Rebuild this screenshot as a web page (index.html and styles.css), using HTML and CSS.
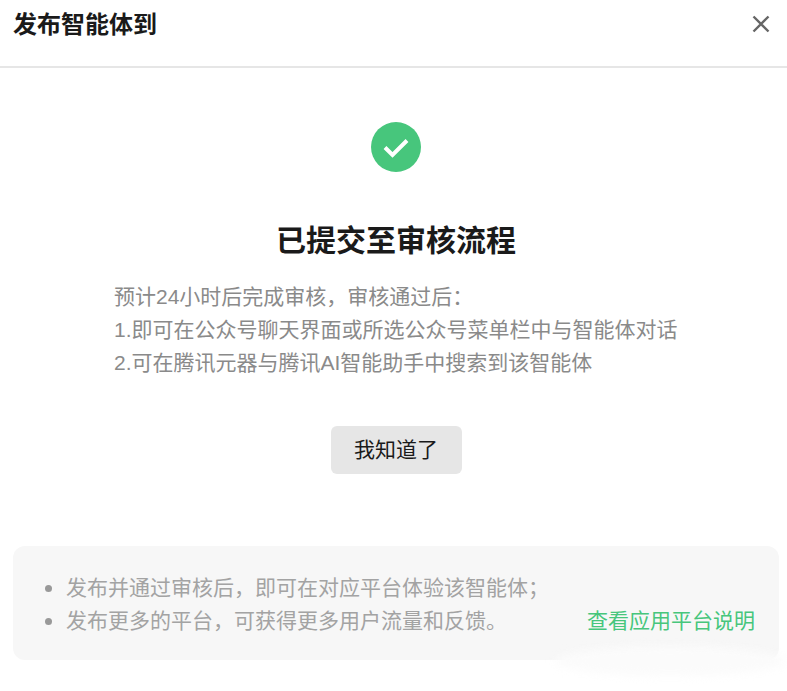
FILE: index.html
```html
<!doctype html>
<html lang="zh-CN">
<head>
  <meta charset="UTF-8">
  <title>发布智能体到</title>
  <link rel="stylesheet" href="styles.css">
</head>
<body>
<div class="dialog">
  <div class="head">
    <span class="head-title">发布智能体到</span>
    <svg class="close" width="20" height="20" viewBox="0 0 20 20">
      <path d="M2.5 2.5L17.5 17.5M17.5 2.5L2.5 17.5" stroke="#666" stroke-width="2.4" fill="none"/>
    </svg>
  </div>
  <div class="main">
    <svg class="ok" width="50" height="50" viewBox="0 0 50 50">
      <circle cx="25" cy="25" r="25" fill="#47c67c"/>
      <path d="M14 25.5L21.5 33L36 18.5" stroke="#fff" stroke-width="4" fill="none"/>
    </svg>
    <h2 class="title">已提交至审核流程</h2>
    <div class="desc">
      <p>预计24小时后完成审核，审核通过后：</p>
      <p>1.即可在公众号聊天界面或所选公众号菜单栏中与智能体对话</p>
      <p>2.可在腾讯元器与腾讯AI智能助手中搜索到该智能体</p>
    </div>
    <a href="#" class="btn">我知道了</a>
  </div>
  <div class="tips">
    <ul class="tips-list">
      <li>发布并通过审核后，即可在对应平台体验该智能体；</li>
      <li>发布更多的平台，可获得更多用户流量和反馈。</li>
    </ul>
    <a href="#" class="tips-link">查看应用平台说明</a>
    <div class="smear"></div>
  </div>
</div>
</body>
</html>
```

FILE: styles.css
```css
body {
  margin: 0;
  background: #fff;
  font-family: "Liberation Sans", "Noto Sans CJK SC", sans-serif;
}
.dialog {
  width: 787px;
  height: 691px;
  overflow: hidden;
}
.head {
  height: 68px;
  box-sizing: border-box;
  padding: 8px 16px 0 13px;
  display: flex;
  justify-content: space-between;
  border-bottom: 2px solid #e6e6e6;
}
.head-title {
  font-size: 24px;
  line-height: 34px;
  font-weight: 700;
  color: #1a1a1a;
}
.close {
  margin-top: 6px;
}
.main {
  display: flex;
  flex-direction: column;
  align-items: center;
  margin: 0 8px 0 13px;
  padding-top: 54px;
}
.title {
  margin: 47px 0 0;
  font-size: 30px;
  line-height: 44px;
  font-weight: 700;
  color: #1a1a1a;
}
.desc {
  width: 564px;
  margin-top: 17px;
  font-size: 21px;
  line-height: 33px;
  color: #8a8a8a;
}
.desc p {
  margin: 0;
}
.btn {
  width: 131px;
  height: 48px;
  margin-top: 47px;
  line-height: 48px;
  text-align: center;
  font-size: 21px;
  color: #1a1a1a;
  text-decoration: none;
  background: #e6e6e6;
  border-radius: 6px;
}
.tips {
  position: relative;
  height: 114px;
  box-sizing: border-box;
  margin: 72px 8px 0 13px;
  padding: 25px 24px 0 0;
  display: flex;
  justify-content: space-between;
  align-items: flex-start;
  background: #f7f7f7;
  border-radius: 12px;
}
.tips-list {
  margin: 0;
  padding: 0 0 0 32px;
  list-style: none;
  font-size: 21px;
  line-height: 33px;
  color: #a3a3a3;
}
.tips-list li::before {
  content: "";
  display: inline-block;
  width: 7px;
  height: 7px;
  margin-right: 14px;
  vertical-align: 3px;
  border-radius: 50%;
  background: #999;
}
.tips-link {
  margin-top: 33px;
  font-size: 21px;
  line-height: 33px;
  color: #47c67c;
  text-decoration: none;
}
.smear {
  position: absolute;
  right: -6px;
  bottom: -16px;
  width: 230px;
  height: 30px;
  border-radius: 50%;
  background: #fbfbfb;
  filter: blur(4px);
}
```
